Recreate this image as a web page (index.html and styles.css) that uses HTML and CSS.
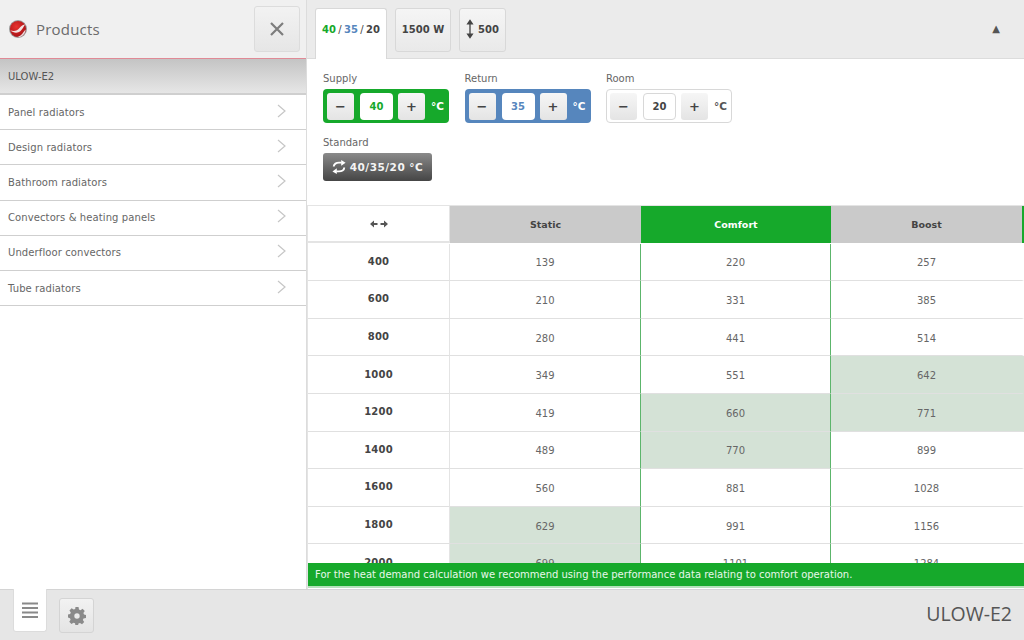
FILE: index.html
```html
<!DOCTYPE html>
<html lang="en">
<head>
<meta charset="utf-8">
<title>Products</title>
<link rel="stylesheet" href="styles.css">
</head>
<body>
<div class="app">
  <div class="main">
    <aside class="sidebar">
      <header class="side-head">
        <svg class="logo" viewBox="0 0 20 20" width="20" height="20">
          <defs><radialGradient id="lg" cx="0.4" cy="0.35" r="0.7"><stop offset="0" stop-color="#e8342f"/><stop offset="1" stop-color="#a50f14"/></radialGradient></defs>
          <circle cx="10" cy="10" r="9" fill="#9a9a9a"/>
          <circle cx="10" cy="10" r="8" fill="url(#lg)"/>
          <path d="M2.500 11.500C6 12.500 9.500 12 11.500 9 12.500 7.500 14 6 17 5.500 15.500 8 14.500 10 12.500 12 9.500 14.500 5.500 14 2.500 11.500z" fill="#f3e3e3"/>
          <path d="M9 18c2-.5 5-2 6.500-5l2-2.500c0 3-2 6.500-5.500 7.500z" fill="#e9dcdc"/>
        </svg>
        <span class="side-title">Products</span>
        <button class="close-btn" type="button">
          <svg viewBox="0 0 16 16" width="16" height="16"><path d="M2 2l12 12M14 2L2 14" stroke="#7d7d7d" stroke-width="2.200" fill="none"/></svg>
        </button>
      </header>
      <div class="side-group">ULOW-E2</div>
      <ul class="side-list">
        <li class="side-item"><span>Panel radiators</span><svg class="chev" viewBox="0 0 10 14" width="10" height="14"><path d="M1 1l7 6-7 6" fill="none" stroke="#c6c6c6" stroke-width="1.200"/></svg></li>
        <li class="side-item"><span>Design radiators</span><svg class="chev" viewBox="0 0 10 14" width="10" height="14"><path d="M1 1l7 6-7 6" fill="none" stroke="#c6c6c6" stroke-width="1.200"/></svg></li>
        <li class="side-item"><span>Bathroom radiators</span><svg class="chev" viewBox="0 0 10 14" width="10" height="14"><path d="M1 1l7 6-7 6" fill="none" stroke="#c6c6c6" stroke-width="1.200"/></svg></li>
        <li class="side-item"><span>Convectors &amp; heating panels</span><svg class="chev" viewBox="0 0 10 14" width="10" height="14"><path d="M1 1l7 6-7 6" fill="none" stroke="#c6c6c6" stroke-width="1.200"/></svg></li>
        <li class="side-item"><span>Underfloor convectors</span><svg class="chev" viewBox="0 0 10 14" width="10" height="14"><path d="M1 1l7 6-7 6" fill="none" stroke="#c6c6c6" stroke-width="1.200"/></svg></li>
        <li class="side-item"><span>Tube radiators</span><svg class="chev" viewBox="0 0 10 14" width="10" height="14"><path d="M1 1l7 6-7 6" fill="none" stroke="#c6c6c6" stroke-width="1.200"/></svg></li>
      </ul>
    </aside>
    <section class="content">
      <nav class="tabs">
        <div class="tab tab-active"><span class="c-green">40</span><span class="sep">/</span><span class="c-blue">35</span><span class="sep">/</span>20</div>
        <div class="tab tab-power">1500 W</div>
        <div class="tab tab-height">
          <svg viewBox="0 0 9 22" width="8" height="20"><path d="M4.500 2v18" stroke="#444" stroke-width="1.500"/><path d="M4.500 0L8.500 6H.5zM4.500 22L.5 16h8z" fill="#444"/></svg>
          500
        </div>
        <div class="collapse">▲</div>
      </nav>
      <div class="settings">
        <div class="temps">
          <div class="temp-group">
            <label class="temp-label">Supply</label>
            <div class="stepper stepper-green">
              <span class="step">−</span><span class="value">40</span><span class="step">+</span><span class="unit">°C</span>
            </div>
          </div>
          <div class="temp-group">
            <label class="temp-label">Return</label>
            <div class="stepper stepper-blue">
              <span class="step">−</span><span class="value">35</span><span class="step">+</span><span class="unit">°C</span>
            </div>
          </div>
          <div class="temp-group">
            <label class="temp-label">Room</label>
            <div class="stepper stepper-plain">
              <span class="step">−</span><span class="value">20</span><span class="step">+</span><span class="unit">°C</span>
            </div>
          </div>
        </div>
        <div class="standard">
          <label class="temp-label">Standard</label>
          <div class="std-btn">
            <svg viewBox="0 0 16 16" width="14" height="16"><path d="M2 7.500C2 4.500 5 3 8 3h3" fill="none" stroke="#fff" stroke-width="2.200"/><path d="M10.500 0L15.500 3l-5 3.500z" fill="#fff"/><path d="M14 8.500C14 11.500 11 13 8 13H5" fill="none" stroke="#fff" stroke-width="2.200"/><path d="M5.500 9.500L.5 13l5 3z" fill="#fff"/></svg>
            40/35/20 °C
          </div>
        </div>
      </div>
      <div class="table-wrap">
        <div class="grid">
          <div class="cell head-dim"><svg viewBox="0 0 18 8" width="18" height="8"><path d="M0 4l4-3.500v2.500h3.500v2H4v2.500zM18 4l-4-3.500v2.500h-3.500v2H14v2.500z" fill="#555"/></svg></div>
          <div class="cell head">Static</div>
          <div class="cell head head-on">Comfort</div>
          <div class="cell head head-last">Boost</div>

          <div class="cell dim">400</div><div class="cell g">139</div><div class="cell g">220</div><div class="cell e">257</div>
          <div class="cell dim">600</div><div class="cell g">210</div><div class="cell g">331</div><div class="cell e">385</div>
          <div class="cell dim">800</div><div class="cell g">280</div><div class="cell g">441</div><div class="cell e">514</div>
          <div class="cell dim">1000</div><div class="cell g">349</div><div class="cell g">551</div><div class="cell e hl">642</div>
          <div class="cell dim">1200</div><div class="cell g">419</div><div class="cell g hl">660</div><div class="cell e hl">771</div>
          <div class="cell dim">1400</div><div class="cell g">489</div><div class="cell g hl">770</div><div class="cell e">899</div>
          <div class="cell dim">1600</div><div class="cell g">560</div><div class="cell g">881</div><div class="cell e">1028</div>
          <div class="cell dim">1800</div><div class="cell g hl">629</div><div class="cell g">991</div><div class="cell e">1156</div>
          <div class="cell dim">2000</div><div class="cell g hl">699</div><div class="cell g">1101</div><div class="cell e">1284</div>
        </div>
        <div class="note">For the heat demand calculation we recommend using the performance data relating to comfort operation.</div>
      </div>
    </section>
  </div>
  <footer class="footer">
    <div class="foot-tab">
      <svg viewBox="0 0 16 16" width="16" height="16"><path d="M0 1.500h16M0 6h16M0 10.500h16M0 15h16" stroke="#8a8a8a" stroke-width="2"/></svg>
    </div>
    <div class="foot-btn">
      <svg viewBox="0 0 20 20" width="18" height="18"><path fill="#8a8a8a" fill-rule="evenodd" d="M8.300 0h3.400l.5 2.800 1.700.7L16.200 2l2.400 2.400-1.500 2.300.7 1.700 2.200.5v3.400l-2.800.5-.7 1.700 1.500 2.300-2.400 2.400-2.300-1.500-1.700.7-.5 2.500H8.300l-.5-2.800-1.700-.7-2.300 1.500-2.400-2.400 1.500-2.300-.7-1.700L0 11.700V8.300l2.400-.5.700-1.700-1.500-2.300L4 1.400l2.300 1.500 1.700-.7zM10 7a3 3 0 100 6 3 3 0 000-6z"/></svg>
    </div>
    <div class="foot-title">ULOW-E2</div>
  </footer>
</div>
</body>
</html>
```

FILE: styles.css
```css
* { box-sizing: border-box; }
html, body { margin: 0; padding: 0; height: 100%; overflow: hidden; }
body { font-family: "DejaVu Sans", Verdana, sans-serif; font-size: 10px; color: #555; background: #fff; }
ul { list-style: none; margin: 0; padding: 0; }

.app { width: 1024px; height: 640px; display: flex; flex-direction: column; }
.main { flex: 1; display: flex; min-height: 0; }

/* Sidebar */
.sidebar { width: 307px; flex: none; border-right: 1px solid #dcdcdc; display: flex; flex-direction: column; }
.side-head { height: 59px; flex: none; background: #f0f0f0; border-bottom: 1px solid #e08a96; display: flex; align-items: center; padding: 0 6px 0 8px; }
.logo { flex: none; }
.side-title { font-family: "Open Sans", sans-serif; font-size: 15px; letter-spacing: .2px; color: #6b6b6b; margin-left: 8px; flex: 1; }
.close-btn { width: 46px; height: 46px; padding: 0; border: 1px solid #dcdcdc; border-radius: 3px; background: linear-gradient(#f2f2f2, #e6e6e6); display: flex; align-items: center; justify-content: center; }
.side-group { height: 36px; flex: none; background: linear-gradient(#c4c4c4, #e6e6e6); border-bottom: 2px solid #cfcfcf; padding: 0 8px; display: flex; align-items: center; font-size: 10px; color: #555; }
.side-item { height: 35.2px; border-bottom: 1px solid #cfcfcf; padding: 0 19px 0 8px; display: flex; align-items: center; justify-content: space-between; font-size: 10px; color: #666; letter-spacing: .1px; }
.chev { flex: none; margin-top: -3px; }

/* Tabs */
.content { flex: 1; min-width: 0; display: flex; flex-direction: column; }
.tabs { height: 59px; flex: none; background: #ebebeb; border-bottom: 1px solid #dcdcdc; display: flex; align-items: flex-start; padding: 8px 24px 0 8px; gap: 8px; font-size: 10px; color: #444; }
.tab { height: 44px; padding-bottom: 2px; background: linear-gradient(#f5f5f5, #e9e9e9); border: 1px solid #d8d8d8; border-radius: 3px; display: flex; align-items: center; justify-content: center; gap: 4px; font-size: 10px; font-weight: 700; }
.tab-active { width: 72px; height: 51px; background: #fff; border-bottom: none; border-radius: 3px 3px 0 0; padding-bottom: 9px; gap: 0; }
.tab-power { width: 56px; }
.tab-height { width: 47px; }
.sep { margin: 0 2.4px; font-weight: 400; }
.c-green { color: #16a92b; }
.c-blue { color: #5686bd; }
.collapse { margin-left: auto; font-size: 10px; color: #555; align-self: center; margin-top: -9px; }

/* Settings */
.settings { height: 146px; flex: none; padding: 14px 16px 0; }
.temps { display: flex; gap: 15.5px; }
.temp-label { display: block; font-size: 10px; line-height: 12px; color: #666; margin-bottom: 4px; }
.stepper { width: 126px; height: 34px; border-radius: 4px; display: flex; align-items: center; padding: 0 4px; }
.stepper-green { background: #16a92b; color: #fff; }
.stepper-blue { background: #5686bd; color: #fff; }
.stepper-plain { background: #fff; border: 1px solid #d8d8d8; color: #555; padding: 0 3px; }
.step { width: 27px; height: 27px; flex: none; border-radius: 3px; background: linear-gradient(#f6f6f6, #e4e4e4); display: flex; align-items: center; justify-content: center; font-size: 13px; font-weight: 700; color: #444; }
.value { width: 33px; height: 27px; flex: none; margin: 0 5px 0 6px; border-radius: 4px; background: #fff; display: flex; align-items: center; justify-content: center; font-size: 10px; font-weight: 700; color: #444; }
.stepper-green .value { color: #16a92b; }
.stepper-blue .value { color: #5686bd; }
.stepper-plain .value { border: 1px solid #d8d8d8; }
.unit { margin-left: 6px; font-size: 10.5px; font-weight: 700; }
.standard { margin-top: 14px; }
.std-btn { width: 109px; height: 28px; border-radius: 3px; background: linear-gradient(#8a8a8a, #454545); color: #f4f4f4; display: flex; align-items: center; justify-content: center; gap: 4px; font-size: 10.5px; font-weight: 700; letter-spacing: .5px; }

/* Table */
.table-wrap { flex: 1; min-height: 0; position: relative; overflow: hidden; border-top: 1px solid #e4e4e4; border-left: 1px solid #e4e4e4; }
.grid { display: grid; grid-template-columns: 142px 191px 190px 193px; grid-auto-rows: 37.6px; width: 716px; }
.grid > .cell:nth-child(-n+4) { height: 36.5px; }
.cell { display: flex; align-items: center; justify-content: center; border-bottom: 1px solid #e0e0e0; background: #fff; font-size: 10px; color: #666; padding-top: 2px; }
.head { background: #cacaca; font-size: 9.5px; font-weight: 700; border-bottom: none; color: #444; padding-top: 0; }
.head-dim { border-bottom: 2px solid #e4e4e4; border-right: 1px solid #e4e4e4; }
.head-on { background: #16a92b; color: #fff; }
.head-last { border-right: 2px solid #16a92b; }
.dim { font-weight: 700; letter-spacing: .2px; color: #444; border-right: 1px solid #e4e4e4; padding-top: 0; padding-bottom: 1px; }
.g { border-right: 1px solid #5cb56b; }
.e { border-right: 2px solid transparent; }
.hl { background: #d4e2d6; }
.note { position: absolute; left: 0; right: 0; top: 357px; height: 23px; background: #16a92b; color: #e9f7ea; font-size: 10px; line-height: 24px; padding-left: 7px; box-shadow: 0 2px 0 #b5e0ba; }

/* Footer */
.footer { height: 51px; flex: none; background: #e6e6e6; border-top: 1px solid #d4d4d4; display: flex; align-items: flex-start; padding: 0 12px 0 13px; gap: 12px; }
.foot-tab { width: 34px; height: 43px; margin-top: -1px; background: #fff; border-radius: 0 0 3px 3px; border: 1px solid #dcdcdc; border-top: none; display: flex; align-items: center; justify-content: center; }
.foot-btn { width: 35px; height: 35px; margin-top: 8px; border: 1px solid #d4d4d4; border-radius: 3px; background: linear-gradient(#f2f2f2, #e4e4e4); display: flex; align-items: center; justify-content: center; }
.foot-title { margin-left: auto; font-family: "Open Sans", sans-serif; font-size: 19.5px; color: #555; line-height: 48px; }
```
